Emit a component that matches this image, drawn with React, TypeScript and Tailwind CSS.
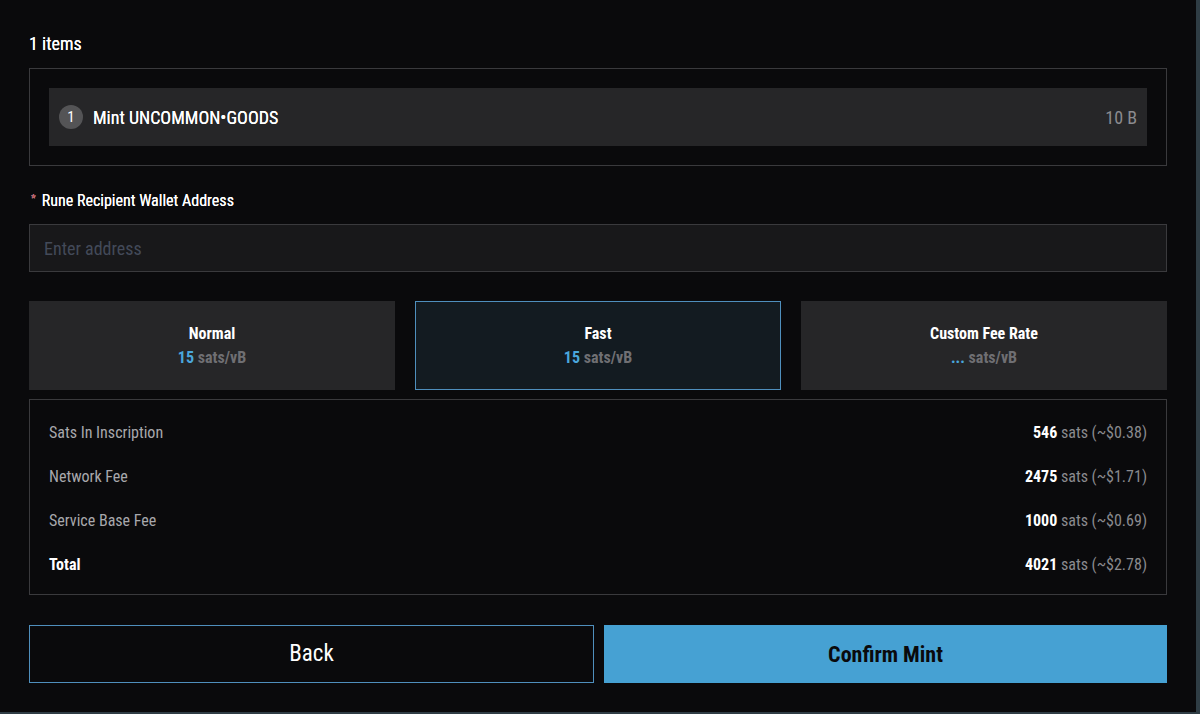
import React from "react";

const fontStack = {
  fontFamily: '"Roboto Condensed", "DejaVu Sans Condensed", "Roboto", sans-serif',
};

const feeOptions = [
  { id: "normal", label: "Normal", rate: "15", selected: false },
  { id: "fast", label: "Fast", rate: "15", selected: true },
  { id: "custom", label: "Custom Fee Rate", rate: "...", selected: false },
];

const feeRows = [
  { label: "Sats In Inscription", sats: "546", usd: "~$0.38", total: false },
  { label: "Network Fee", sats: "2475", usd: "~$1.71", total: false },
  { label: "Service Base Fee", sats: "1000", usd: "~$0.69", total: false },
  { label: "Total", sats: "4021", usd: "~$2.78", total: true },
];

export default function App() {
  return (
    <div className="w-[1200px] h-[714px] bg-[#2f3d45] overflow-hidden" style={fontStack}>
      <div className="w-[1196px] h-[712px] bg-[#0a0a0c] px-[29px] pt-[32px] flex flex-col">
        {/* Items */}
        <div className="h-6 leading-6 text-[18px] text-white [text-shadow:0_0_0.3px_#fff]">1 items</div>
        <div className="mt-3 border border-[#3a3a3d] p-[19px]">
          <div className="h-[58px] bg-[#262628] flex items-center px-[10px]">
            <div className="w-6 h-6 rounded-full bg-[#545456] text-white text-[15px] flex items-center justify-center">
              1
            </div>
            <span className="ml-[10px] text-[18px] text-white [text-shadow:0_0_0.4px_#fff]">Mint UNCOMMON•GOODS</span>
            <span className="ml-auto text-[18px] text-[#8b8b8f]">10 B</span>
          </div>
        </div>

        {/* Recipient address */}
        <div className="mt-[23px] h-6 flex items-center text-[16px] text-white [text-shadow:0_0_0.4px_#fff]">
          <span className="text-[#c0444f] text-[11px] self-start mt-[2px] ml-[2px] mr-[6px]">*</span>
          Rune Recipient Wallet Address
        </div>
        <input
          className="mt-[11px] h-[48px] w-full bg-[#18181a] border border-[#3a3a3d] px-[14px] text-[18px] text-white placeholder:text-[#434a59] outline-none"
          placeholder="Enter address"
          style={fontStack}
        />

        {/* Fee rate options */}
        <div className="mt-[29px] grid grid-cols-3 gap-5">
          {feeOptions.map((opt) => (
            <div
              key={opt.id}
              className={
                opt.selected
                  ? "h-[89px] bg-[#131b21] border border-[#4f8fbd] flex flex-col items-center justify-center"
                  : "h-[89px] bg-[#262628] flex flex-col items-center justify-center"
              }
            >
              <div className="h-6 leading-6 text-[16px] font-bold text-white">{opt.label}</div>
              <div className="h-6 leading-6 text-[16px] font-bold">
                <span className="text-[#4aa6dc]">{opt.rate}</span>
                <span className="text-[#6f6f73]"> sats/vB</span>
              </div>
            </div>
          ))}
        </div>

        {/* Fee summary */}
        <div className="mt-[9px] border border-[#3a3a3d] pt-[11px] pb-[7px] px-[19px]">
          {feeRows.map((row) => (
            <div key={row.label} className="h-[44px] flex items-center justify-between text-[16px]">
              <span className={row.total ? "text-white font-bold" : "text-[#a8a8ac]"}>{row.label}</span>
              <span>
                <span className="text-white font-bold">{row.sats}</span>
                <span className="text-[#8b8b8f]"> sats ({row.usd})</span>
              </span>
            </div>
          ))}
        </div>

        {/* Actions */}
        <div className="mt-[30px] flex gap-[10px]">
          <button
            className="flex-1 h-[58px] border border-[#4f8fbd] bg-transparent text-white text-[23px]"
            style={fontStack}
          >
            Back
          </button>
          <button
            className="flex-1 h-[58px] bg-[#46a1d3] text-[#0a0a0c] text-[22px] font-bold"
            style={fontStack}
          >
            Confirm Mint
          </button>
        </div>
      </div>
    </div>
  );
}
